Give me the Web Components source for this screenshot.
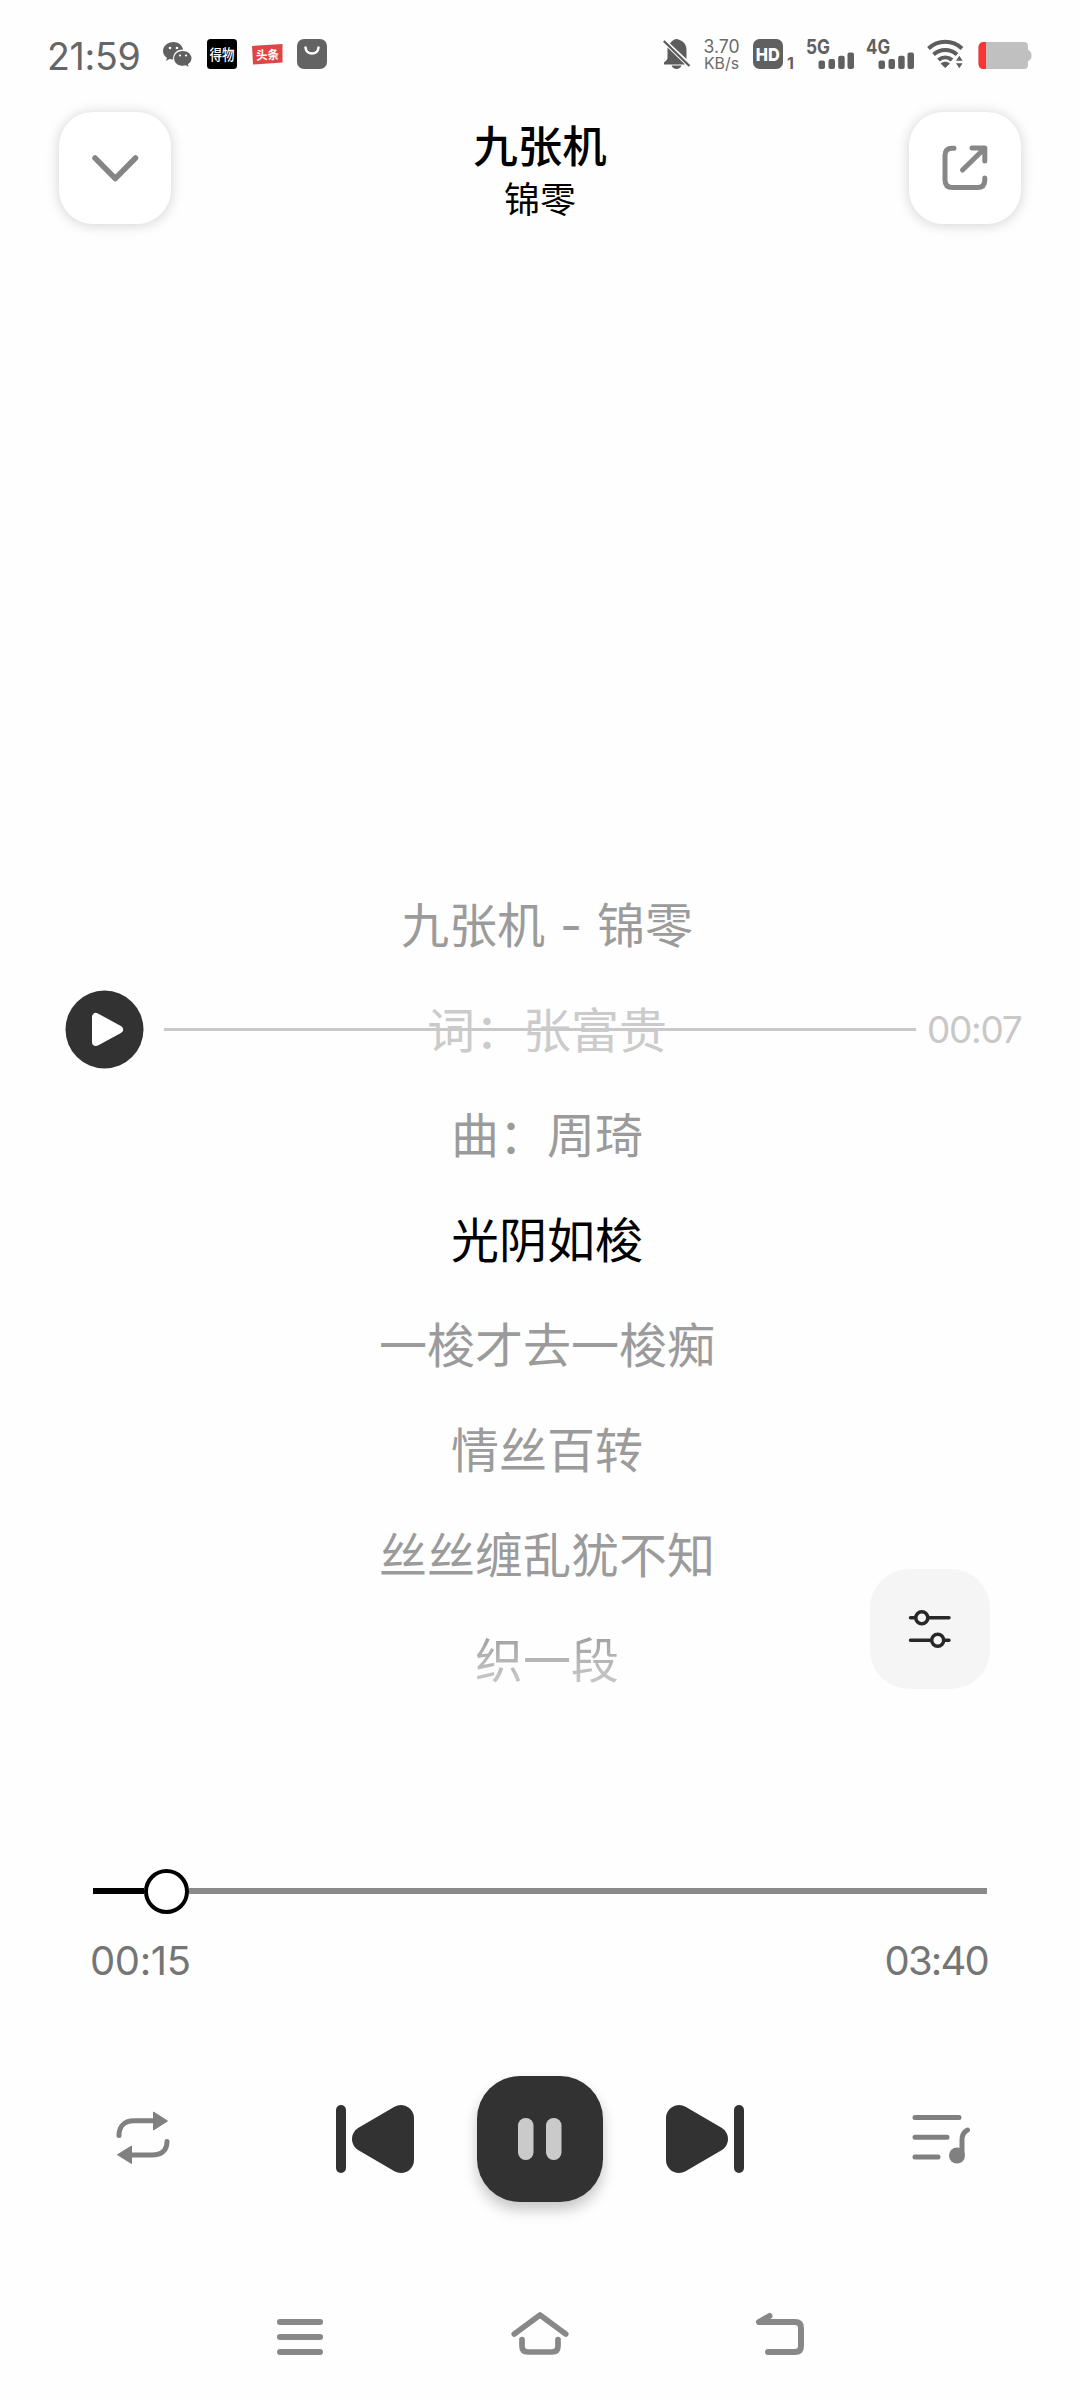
<!DOCTYPE html>
<html lang="zh-CN">
<head>
<meta charset="utf-8">
<title>九张机</title>
<style>
html,body{margin:0;padding:0;background:#fefefe}
body{width:1080px;height:2400px;overflow:hidden;font-family:Inter,"Noto Sans CJK SC",sans-serif}
</style>
</head>
<body>
<music-player></music-player>
<script>
const icons = {
  wechat: [29, 26, `<g fill="#606060"><path d="M10.500 0C4.700 0 0 4 0 9c0 2.900 1.500 5.300 4 7l-1 3 3.600-1.900c1 .3 2.400.5 3.600.5-.8-5.500 3.500-10.300 10-10C19.200 3.100 15.200 0 10.500 0z"/><path d="M28.500 16.300c0-4.200-3.900-7.300-8.700-7.300s-8.700 3.200-8.700 7.400 3.900 7.400 8.700 7.400c1 0 2-.2 3-.5l2.900 1.500-.8-2.500c2.200-1.400 3.600-3.500 3.600-6z"/></g><g fill="#fff"><circle cx="7" cy="6" r="1.300"/><circle cx="14" cy="6" r="1.300"/><circle cx="17" cy="13.500" r="1.100"/><circle cx="23" cy="13.500" r="1.100"/></g>`],
  dewu: [30, 30, `<rect width="30" height="30" rx="3.500"/><text x="2.500" y="20.700" font-size="15" font-weight="500" textLength="25" lengthAdjust="spacingAndGlyphs" fill="#fff">得物</text>`],
  toutiao: [31, 22, `<path d="M0 2L30.500 0v18.500L1 20.500z" fill="#e04545"/><text x="4" y="15.500" font-size="12.500" font-weight="700" textLength="23" lengthAdjust="spacingAndGlyphs" fill="#fff" transform="rotate(-3 15 11)">头条</text>`],
  bag: [30, 30, `<rect width="30" height="30" rx="7" fill="#636363"/><path d="M8.500 8.500c.6 8 12.500 8 13 0" fill="none" stroke="#fff" stroke-width="2.600" stroke-linecap="round"/>`],
  bell: [28, 30, `<path d="M7 4.500C8.500 2 10.500 1.200 11 .8c1.500-1 3.500-1 5 0 5 1.800 7.500 5 7.500 10.200v9L7 4.500zM4.500 8.500L22 25.500H1v-2c2-1.500 3.500-3 3.500-5zM8.500 26.500h10c-1.500 4.500-8.500 4.500-10 0z" fill="#5c5c5c"/><path d="M.8 2L26.500 27" stroke="#5c5c5c" stroke-width="2.300"/>`],
  speed: [37, 32, `<g fill="#6a6a6a"><text x="-0.500" y="13.500" font-size="18" textLength="36" lengthAdjust="spacingAndGlyphs">3.70</text><text x="0" y="30" font-size="16" textLength="35" lengthAdjust="spacingAndGlyphs">KB/s</text></g>`],
  hd: [41, 30, `<rect width="30" height="30" rx="6.500" fill="#606060"/><text x="2.800" y="21.500" font-size="18" font-weight="800" textLength="24" lengthAdjust="spacingAndGlyphs" fill="#fff">HD</text><text x="34" y="29.500" font-size="16" font-weight="700" fill="#606060">1</text>`],
  sig5: [48, 31, `<text x="0" y="14.700" font-size="20.500" font-weight="700" textLength="24" lengthAdjust="spacingAndGlyphs" fill="#606060">5G</text><g fill="#606060"><rect x="12.500" y="21.500" width="6.500" height="8.500" rx="2"/><rect x="22.500" y="20" width="6.500" height="10" rx="2"/><rect x="32.200" y="16.700" width="6.500" height="13.300" rx="2"/><rect x="41.500" y="13.500" width="6.500" height="16.500" rx="2"/></g>`],
  wifi: [38, 30, `<g fill="none" stroke="#5e5e5e" stroke-width="4"><path d="M1.500 9.500C11 .5 25.500.5 35 9.500"/><path d="M6.500 15.500c7-6 16.500-6 23.500 0"/><path d="M11.500 21c4-3.500 9.500-3.500 13.500 0"/></g><path d="M13.500 24.500c3-2.300 6.500-2.300 9.500 0l-4.800 4.500zM29 21.800l3.300-5 3.300 5zM29 24.200l3.300 5 3.300-5z" fill="#5e5e5e"/>`],
  battery: [54, 27, `<path d="M6 0h40q4 0 4 4v4q3.500 1 3.500 5.500T50 19v3.500q0 4.500-4 4.500H6q-5.500 0-5.500-5.500V5.500Q.5 0 6 0z" fill="#c0c0c0"/><path d="M8 0H6Q.5 0 .5 5.500v16Q.5 27 6 27h2z" fill="#fb3333"/>`],
  down: [46, 27, `<path d="M3 3l20.300 20.500L43.500 3" fill="none" stroke="#858585" stroke-width="5.500" stroke-linecap="round" stroke-linejoin="round"/>`],
  share: [46, 46, `<g fill="none" stroke="#878787" stroke-width="5" stroke-linecap="round" stroke-linejoin="round"><path d="M12 3.200h-2Q3 3.200 3 10.500V35q0 7.500 7.500 7.500h25Q42.800 42.500 42.800 35v-2"/><path d="M30 3h12.800v13M42 4L20.500 25"/></g>`],
  play: [79, 79, `<circle cx="39.500" cy="39.500" r="39" fill="#323232"/><path d="M31 27v25L54 39.500z" fill="#fff" stroke="#fff" stroke-width="8" stroke-linejoin="round"/>`],
  tune: [44, 42, `<g fill="none" stroke="#282828" stroke-width="3.500" stroke-linecap="round"><path d="M2.500 9.700h4.500M20.500 9.700h20.500M2.500 32.300h20.500M36.500 32.300h4.500"/><circle cx="13.800" cy="9.700" r="6"/><circle cx="29.700" cy="32.300" r="6"/></g>`],
  repeat: [53, 56, `<g fill="none" stroke="#808080" stroke-width="5" stroke-linecap="round"><path d="M3 24.500C3 15 9 9.800 18 9.800h21"/><path d="M51 30.500C51 40 45 44 36 44H14"/></g><g fill="#808080" stroke="#808080" stroke-width="1" stroke-linejoin="round"><path d="M37.500 1l14 9-14 9zM15.500 35v17.500l-14-8.800z"/></g>`],
  prev: [78, 68, `<rect width="10" height="68" rx="5" fill="#323232"/><path d="M65 13v42L29 34z" fill="#323232" stroke="#323232" stroke-width="26" stroke-linejoin="round"/>`],
  pause: [44, 42, `<g fill="#cacaca"><rect width="15.500" height="42" rx="7.500"/><rect x="28" width="15.500" height="42" rx="7.500"/></g>`],
  list: [60, 52, `<g fill="none" stroke="#808080" stroke-width="5" stroke-linecap="round"><path d="M4 4.500h44M4 24.200h32M4 44h23M51 41V27q0-7 5.500-10"/></g><circle cx="46" cy="42.500" r="8" fill="#808080"/>`],
  menu: [46, 40, `<path d="M3 5h40M3 20h40M3 35h40" stroke="#888" stroke-width="6" stroke-linecap="round"/>`],
  home: [58, 46, `<g fill="none" stroke="#888" stroke-width="5.700" stroke-linecap="round" stroke-linejoin="round"><path d="M3.300 24L29 5l25.700 19"/><path d="M11 29.500V36q0 6 6 6h24q6 0 6-6v-6.500"/></g>`],
  back: [50, 46, `<path d="M13.500 6L3 12h36q6 0 6 6v18q0 6-6 6H12" fill="none" stroke="#888" stroke-width="6" stroke-linecap="round" stroke-linejoin="round"/>`]
};
icons.sig4 = [icons.sig5[0], icons.sig5[1], icons.sig5[2].replace('5G','4G')];
icons.next = [78, 68, `<g transform="matrix(-1 0 0 1 78 0)">${icons.prev[2]}</g>`];

function define(name, html) {
  customElements.define(name, class extends HTMLElement {
    constructor() {
      super();
      const t = document.createElement('template');
      t.innerHTML = html;
      this.attachShadow({mode: 'open'}).append(t.content.cloneNode(true));
    }
  });
}

customElements.define('player-icon', class extends HTMLElement {
  connectedCallback() {
    if (this.shadowRoot) return;
    const [w, h, body] = icons[this.getAttribute('name')];
    this.attachShadow({mode: 'open'}).innerHTML =
      `<style>:host{display:block;flex:none;width:${w}px;height:${h}px}svg{display:block;overflow:visible}</style>
       <svg width="${w}" height="${h}" viewBox="0 0 ${w} ${h}">${body}</svg>`;
  }
});

define('status-bar', `<style>
:host{display:flex;height:74px;padding:34px 48px 0 47px;box-sizing:content-box;width:985px;justify-content:space-between;align-items:flex-start}
div{display:flex;align-items:flex-start}
.time{font-size:37.500px;line-height:46px;color:#666;letter-spacing:-.3px;width:116px}
.icons{padding-top:5px}
.start{flex:1}
</style>
<span class="time">21:59</span>
<div class="icons start">
<player-icon name="wechat" style="margin-top:3px"></player-icon>
<player-icon name="dewu" style="margin-left:15px"></player-icon>
<player-icon name="toutiao" style="margin:5px 0 0 15px"></player-icon>
<player-icon name="bag" style="margin-left:14px"></player-icon></div>
<div class="icons">
<player-icon name="bell"></player-icon>
<player-icon name="speed" style="margin-left:13px"></player-icon>
<player-icon name="hd" style="margin-left:12px"></player-icon>
<player-icon name="sig5" style="margin-left:12px"></player-icon>
<player-icon name="sig4" style="margin-left:12px"></player-icon>
<player-icon name="wifi" style="margin-left:13px"></player-icon>
<player-icon name="battery" style="margin:3px 0 0 13px"></player-icon></div>`);

define('soft-button', `<style>
:host{display:flex;align-items:center;justify-content:center;width:112px;height:112px;border-radius:34px;background:#fff;box-shadow:0 1px 13px rgba(0,0,0,.18)}
</style><slot></slot>`);

define('song-header', `<style>
:host{display:flex;justify-content:space-between;height:130px;padding:4px 59px 0;align-items:flex-start}
hgroup{margin:0;display:flex;flex-direction:column;align-items:center;color:#000;font-family:"Noto Sans CJK SC",sans-serif}
h1{font-size:44.500px;line-height:54px;font-weight:500;margin:5px 0 0}
p{font-size:36px;line-height:50px;margin:1px 0 0}
</style>
<soft-button><player-icon name="down"></player-icon></soft-button>
<hgroup><h1>九张机</h1><p>锦零</p></hgroup>
<soft-button><player-icon name="share"></player-icon></soft-button>`);

define('lyric-line', `<style>
:host{display:flex;justify-content:center;align-items:center;height:105px;font-size:48px;color:#9b9b9b;white-space:pre;line-height:70px;font-family:"Noto Sans CJK SC",sans-serif}
:host([heading]){font-family:Inter,"Noto Sans CJK SC",sans-serif;word-spacing:1.500px}
:host([heading]) span{padding-top:8px}
:host([active]){color:#000}
:host([target]){color:#cbcbcb}
:host([fading]) span{background:linear-gradient(#a4a4a4 25%,#c4c4c4 80%);background-clip:text;-webkit-background-clip:text;color:transparent}
</style><span><slot></slot></span>`);

define('lyric-seek', `<style>
:host{display:flex;align-items:center;position:absolute;left:65px;right:50px;top:105px;height:105px}
i{flex:none;height:3px;background:#c9c9c9;width:752px;margin-left:20px}
span{margin-left:11px;font-size:37px;color:#c8c8c8;letter-spacing:-1.300px}
</style><player-icon name="play"></player-icon><i></i><span>00:07</span>`);

define('lyric-view', `<style>
:host{display:flow-root;position:relative;height:996px}
.lines{padding-left:14px;margin-top:-3px}
.tune{position:absolute;right:90px;top:697px;width:120px;height:120px;border-radius:39px;background:#f5f5f5;display:flex;align-items:center;justify-content:center}
</style>
<div class="lines"><slot></slot></div>
<lyric-seek></lyric-seek>
<div class="tune"><player-icon name="tune"></player-icon></div>`);

define('seek-bar', `<style>
:host{display:block;padding:0 93px 0 93px}
.track{display:flex;align-items:center;height:46px}
.done{width:51px;height:6px;background:#000}
.thumb{width:37px;height:37px;border:4px solid #000;border-radius:50%;background:#fff}
.rest{flex:1;height:6px;background:#8a8a8a}
.times{display:flex;justify-content:space-between;font-size:40px;line-height:50px;color:#757575;margin:22px -1px 0 -3px;letter-spacing:-.4px}
.total{letter-spacing:-1.800px}
</style>
<div class="track"><div class="done"></div><div class="thumb"></div><div class="rest"></div></div>
<div class="times"><span>00:15</span><span class="total">03:40</span></div>`);

define('transport-controls', `<style>
:host{display:flex;align-items:center;justify-content:space-between;height:126px;padding:0 109px 0 116px}
.main{display:flex;align-items:center;gap:63px}
.pause{width:126px;height:126px;border-radius:43px;background:#323232;display:flex;align-items:center;justify-content:center;box-shadow:0 8px 14px rgba(0,0,0,.22)}
</style>
<player-icon name="repeat"></player-icon>
<div class="main"><player-icon name="prev"></player-icon><div class="pause"><player-icon name="pause"></player-icon></div><player-icon name="next"></player-icon></div>
<player-icon name="list"></player-icon>`);

define('system-nav', `<style>
:host{display:flex;align-items:flex-start;justify-content:space-between;padding:0 274px 0 277px}
</style>
<player-icon name="menu" style="margin-top:7px"></player-icon>
<player-icon name="home"></player-icon>
<player-icon name="back"></player-icon>`);

define('music-player', `<style>
:host{display:flex;flex-direction:column;width:1080px;height:2400px;background:#fefefe}
lyric-view{margin-top:630px}
transport-controls{margin-top:90px}
system-nav{margin-top:108px}
</style>
<status-bar></status-bar>
<song-header></song-header>
<lyric-view>
<lyric-line heading>九张机 - 锦零</lyric-line>
<lyric-line target>词：张富贵</lyric-line>
<lyric-line>曲：周琦</lyric-line>
<lyric-line active>光阴如梭</lyric-line>
<lyric-line>一梭才去一梭痴</lyric-line>
<lyric-line>情丝百转</lyric-line>
<lyric-line>丝丝缠乱犹不知</lyric-line>
<lyric-line fading>织一段</lyric-line>
</lyric-view>
<seek-bar></seek-bar>
<transport-controls></transport-controls>
<system-nav></system-nav>`);
</script>
</body>
</html>
